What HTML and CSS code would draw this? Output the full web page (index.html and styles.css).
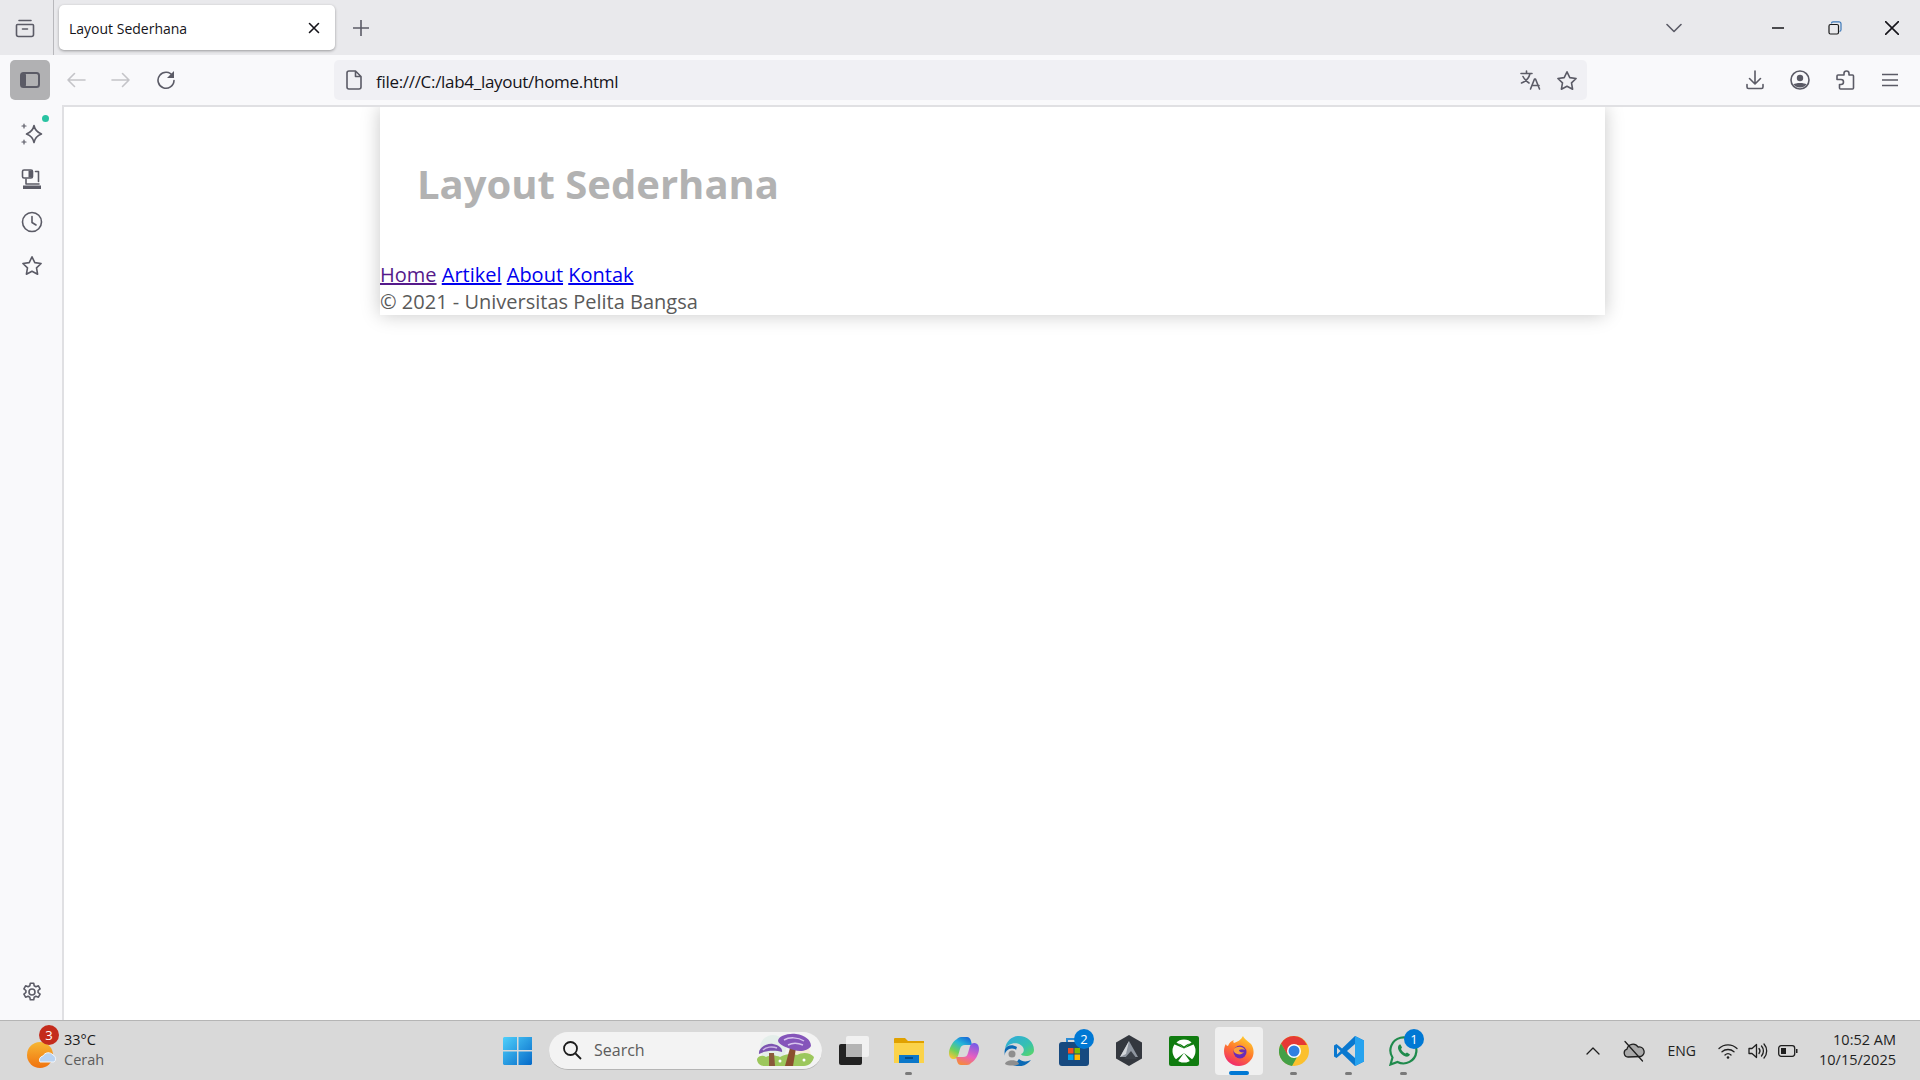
FILE: index.html
```html
<!DOCTYPE html>
<html lang="en">
<head>
  <meta charset="UTF-8">
  <title>Layout Sederhana</title>
  <link rel="stylesheet" href="styles.css">
</head>
<body>
  <div class="tabstrip">
    <div class="tabs-btn">
      <svg class="ico" width="22" height="22" viewBox="0 0 22 22"><path d="M5 3.5h12M3.5 7.5h15a1 1 0 0 1 1 1v9a2 2 0 0 1-2 2h-13a2 2 0 0 1-2-2v-9a1 1 0 0 1 1-1zM8.5 12h5"/></svg>
    </div>
    <div class="tab">
      <span class="tab-title">Layout Sederhana</span>
      <svg class="ico-dark" width="12" height="12" viewBox="0 0 12 12"><path d="M1.5 1.5l9 9M10.5 1.5l-9 9"/></svg>
    </div>
    <div class="new-tab">
      <svg class="ico" width="16" height="16" viewBox="0 0 16 16"><path d="M8 0v16M0 8h16"/></svg>
    </div>
    <div class="tab-list">
      <svg class="ico" width="16" height="10" viewBox="0 0 16 10"><path d="M1 1.5l7 7 7-7"/></svg>
    </div>
    <div class="win-btn">
      <svg class="ico-dark" width="12" height="2" viewBox="0 0 12 2"><path d="M0 1h12"/></svg>
    </div>
    <div class="win-btn">
      <svg width="14" height="14" viewBox="0 0 14 14" fill="none" stroke-width="1.2"><path d="M3.5 2.5v-.2A1.5 1.5 0 0 1 5 .8h6a2 2 0 0 1 2 2v6a1.5 1.5 0 0 1-1.5 1.5" stroke="#3c78b8"/><rect x="1" y="3.5" width="9.5" height="9.5" rx="1.5" stroke="#1a1a1a"/></svg>
    </div>
    <div class="win-btn">
      <svg class="ico-dark" width="14" height="14" viewBox="0 0 14 14"><path d="M.5.5l13 13M13.5.5l-13 13"/></svg>
    </div>
  </div>

  <div class="toolbar">
    <div class="sidebar-toggle">
      <svg width="20" height="16" viewBox="0 0 20 16"><rect x="1" y="1" width="18" height="14" rx="2.5" fill="#b1b1b3" stroke="#5b5b66" stroke-width="2"/><rect x="1" y="1" width="5" height="14" rx="2" fill="#5b5b66"/></svg>
    </div>
    <div class="nav-btn">
      <svg class="ico-faint" width="20" height="16" viewBox="0 0 20 16"><path d="M19 8H2M8.5 1.5L2 8l6.5 6.5"/></svg>
    </div>
    <div class="nav-btn">
      <svg class="ico-faint" width="20" height="16" viewBox="0 0 20 16"><path d="M1 8h17M11.5 1.5L18 8l-6.5 6.5"/></svg>
    </div>
    <div class="nav-btn">
      <svg class="ico" width="20" height="20" viewBox="0 0 20 20"><path d="M16.8 6A8 8 0 1 0 18 10.5"/><path class="solid" d="M18 1v7h-7z"/></svg>
    </div>
    <div class="urlbar">
      <svg class="ico" width="16" height="20" viewBox="0 0 16 20"><path d="M1 3a2 2 0 0 1 2-2h6.5L15 6.5V17a2 2 0 0 1-2 2H3a2 2 0 0 1-2-2zM9.5 1v5.5H15"/></svg>
      <span class="url-text">file:///C:/lab4_layout/home.html</span>
      <div class="url-actions">
        <svg class="ico" width="22" height="20" viewBox="0 0 22 20"><path d="M1 3.5h11M6.5 1v2.5M10 3.5C9 8 5.5 11.5 1.5 13M3 6.5c1.5 3 3.5 5 6 6.5M10.5 19l4-10h1l4 10M12 15.500h7"/></svg>
        <svg class="ico" width="22" height="21" viewBox="0 0 22 21"><path d="M11 1.800l2.800 5.800 6.300.9-4.600 4.400 1.100 6.300L11 16.200l-5.600 3 1.100-6.300L1.900 8.500l6.300-.9z"/></svg>
      </div>
    </div>
    <div class="tool-icons">
      <div class="tool-btn">
        <svg class="ico" width="18" height="20" viewBox="0 0 18 20"><path d="M9 1v12.5M3.5 8.500L9 14l5.500-5.500M1 14.500V17a1.500 1.500 0 0 0 1.500 1.500h13A1.500 1.500 0 0 0 17 17v-2.500"/></svg>
      </div>
      <div class="tool-btn">
        <svg class="ico" width="20" height="20" viewBox="0 0 20 20"><circle cx="10" cy="10" r="9"/><circle class="solid" cx="10" cy="8" r="3.2"/><path class="solid" d="M3.500 14.500c2-2 11-2 13 0-3 4-10 4-13 0z"/></svg>
      </div>
      <div class="tool-btn">
        <svg class="ico" width="20" height="20" viewBox="0 0 20 20"><path d="M9 5V3.500a2.500 2.500 0 0 1 5 0V5h3.500a1 1 0 0 1 1 1v12a1 1 0 0 1-1 1H5.500a1 1 0 0 1-1-1v-3.500H6a2.500 2.500 0 0 0 0-5H2V6a1 1 0 0 1 1-1z"/></svg>
      </div>
      <div class="tool-btn">
        <svg class="ico" width="16" height="14" viewBox="0 0 16 14"><path d="M0 1.500h16M0 7h16M0 12.500h16"/></svg>
      </div>
    </div>
  </div>

  <div class="browser-body">
    <div class="sidebar">
      <div class="side-btn">
        <span class="green-dot"></span>
        <svg class="ico" width="24" height="24" viewBox="0 -1 24 24"><path d="M14 3.500c.9 4.500 3 6.800 7.500 8.500-4.500 1.700-6.600 4-7.500 8.500-.9-4.500-3-6.800-7.500-8.500C11 10.300 13.100 8 14 3.500z"/><path class="thin" d="M4 2v4M2 4h4M4 18v4M2 20h4"/></svg>
      </div>
      <div class="side-btn">
        <svg class="ico" width="22" height="24" viewBox="0 -2 22 24"><rect x="1.500" y="2" width="10" height="8" rx="1.500"/><path class="solid" d="M7.500 2.500h4v7h-4z"/><path d="M14.500 3.500h3v10M5 11v5h13"/><path class="solid" d="M2 17.500h18V21H2z"/></svg>
      </div>
      <div class="side-btn">
        <svg class="ico" width="22" height="22" viewBox="0 0 22 22"><circle cx="11" cy="11" r="9.500"/><path d="M11 5.500V11.500l4 2.500"/></svg>
      </div>
      <div class="side-btn star-btn">
        <svg class="ico" width="22" height="21" viewBox="0 0 22 21"><path d="M11 1.800l2.800 5.800 6.300.9-4.600 4.400 1.100 6.300L11 16.200l-5.600 3 1.100-6.300L1.900 8.500l6.300-.9z"/></svg>
      </div>
      <div class="side-btn side-bottom">
        <svg class="ico" width="20" height="20" viewBox="0 0 20 20"><circle cx="10" cy="10" r="3"/><path d="M8.300 1.200h3.400l.5 2.600 1.700.9 2.500-.9 1.700 3-2 1.700v2l2 1.700-1.700 3-2.500-.9-1.700.9-.5 2.600H8.300l-.5-2.600-1.700-.9-2.500.9-1.700-3 2-1.700v-2l-2-1.700 1.700-3 2.500.9 1.700-.9z"/></svg>
      </div>
    </div>
    <div class="viewport">
      <div class="container">
        <header class="page-header"><h1>Layout Sederhana</h1></header>
        <nav class="page-nav">
          <a class="visited" href="#">Home</a>
          <a href="#">Artikel</a>
          <a href="#">About</a>
          <a href="#">Kontak</a>
        </nav>
        <footer class="page-footer">&copy; 2021 - Universitas Pelita Bangsa</footer>
      </div>
    </div>
  </div>

  <div class="taskbar">
    <div class="weather">
      <div class="weather-icon">
        <svg width="34" height="34" viewBox="0 0 34 34">
          <defs><linearGradient id="sun" x1="0" y1="0" x2="0" y2="1"><stop offset="0" stop-color="#f7b733"/><stop offset="1" stop-color="#f0720f"/></linearGradient></defs>
          <circle cx="14" cy="19" r="13" fill="url(#sun)"/>
          <path d="M14 26a4 4 0 0 1 3-6 6 6 0 0 1 10-1 4 4 0 0 1 1 7z" fill="#b9d3f2" stroke="#f2f6fb"/>
        </svg>
        <span class="badge badge-red">3</span>
      </div>
      <div class="weather-text">
        <span>33&deg;C</span>
        <span class="weather-sub">Cerah</span>
      </div>
    </div>

    <div class="task-center">
      <div class="start">
        <svg width="30" height="30" viewBox="0 0 30 30">
          <defs><linearGradient id="win" x1="0" y1="0" x2="1" y2="1"><stop offset="0" stop-color="#4fd0fb"/><stop offset="1" stop-color="#0569c8"/></linearGradient></defs>
          <path d="M1 1h13v13H0V2zM15.500 1H29v13H15.500zM0 15.500h14V29H1l-1-1zM15.500 15.500H29V28l-1 1H15.500z" fill="url(#win)"/>
        </svg>
      </div>
      <div class="search">
        <svg width="20" height="20" viewBox="0 0 20 20" fill="none" stroke="#1a1a1a" stroke-width="1.8"><circle cx="8.500" cy="8.500" r="6.500"/><path d="M13.500 13.500l5.500 5.500"/></svg>
        <span class="search-text">Search</span>
        <svg class="search-art" width="64" height="34" viewBox="0 0 64 34">
          <circle cx="19" cy="15" r="13" fill="#e4eeea"/>
          <circle cx="47" cy="22" r="10" fill="#f6ead6"/>
          <path d="M3 26c2-4 6-4 9-2 4-2 10-2 14 0 5-3 12-4 17-2 5-3 13-3 17 2-1 5-5 9-10 9H10c-4 0-7-3-7-7z" fill="#9cc75c"/>
          <path d="M15 20h5l1 13h-6z" fill="#8a5a3c"/>
          <path d="M36 15h6l-3 18h-8z" fill="#8a4f2e"/>
          <path d="M5 21c-1-6 7-11 14-10 6 1 10 5 9 8-6-2-16-2-23 2z" fill="#7b54b0"/>
          <path d="M9 17c3-3 9-4 14-2" stroke="#cdb6e6" stroke-width="1.5" fill="none"/>
          <path d="M24 8c0-5 10-8 18-7 9 1 15 6 15 12-3 5-11 6-17 4-7-2-15-5-16-9z" fill="#8555ba"/>
          <path d="M30 7c5-3 14-3 20 1M34 12c4-2 10-2 15 0" stroke="#d8c5ee" stroke-width="1.500" fill="none"/>
          <circle cx="26" cy="28" r="1.500" fill="#fff"/>
          <circle cx="50" cy="27" r="1.500" fill="#fff"/>
        </svg>
      </div>
      <div class="app">
        <svg width="30" height="30" viewBox="0 0 30 30"><rect x="0" y="8" width="23" height="21" rx="2" fill="#222"/><rect x="7" y="0" width="23" height="21" rx="2" fill="#f4f4f4" fill-opacity=".85"/><rect x="7" y="8" width="16" height="13" fill="#b4b4b4"/></svg>
      </div>
      <div class="app dot">
        <svg width="30" height="28" viewBox="0 0 30 28"><path d="M0 2a1 1 0 0 1 1-1h10l3 3h16v5H0z" fill="#e0a100"/><path d="M0 6h30v20H0z" fill="#fbd34a"/><path d="M5 18h20v8H5z" fill="#0b77c9"/><path d="M11 21h8" stroke="#063f74" stroke-width="1.500"/></svg>
      </div>
      <div class="app">
        <svg width="30" height="28" viewBox="0 0 30 28">
          <defs>
            <linearGradient id="copl" x1=".8" y1="0" x2=".2" y2="1"><stop offset="0" stop-color="#1668d8"/><stop offset=".35" stop-color="#27b7d8"/><stop offset=".7" stop-color="#6fd15a"/><stop offset="1" stop-color="#f4c63a"/></linearGradient>
            <linearGradient id="copr" x1=".7" y1="0" x2=".3" y2="1"><stop offset="0" stop-color="#7a5ce6"/><stop offset=".55" stop-color="#e95fc0"/><stop offset="1" stop-color="#f58a3c"/></linearGradient>
          </defs>
          <path d="M8 2c1-1 2-2 4-2h6c2 0 3 1 4 4l1 4h-7c-3 0-4 1-5 4l-2 7c-1 2-2 3-4 3-3 0-5-2-5-6 0-5 4-12 8-14z" fill="url(#copl)"/>
          <path d="M22 26c-1 1-2 2-4 2h-6c-2 0-3-1-4-4l-1-4h7c3 0 4-1 5-4l2-7c1-2 2-3 4-3 3 0 5 2 5 6 0 5-4 12-8 14z" fill="url(#copr)"/>
        </svg>
      </div>
      <div class="app">
        <svg width="30" height="30" viewBox="0 0 30 30">
          <defs><linearGradient id="edge" x1="0" y1="0" x2="1" y2="1"><stop offset="0" stop-color="#2fa8e0"/><stop offset=".6" stop-color="#35c1b0"/><stop offset="1" stop-color="#5fd85c"/></linearGradient></defs>
          <path d="M1 13C2 5 8 0 15 0c8 0 15 6 15 14 0 4-4 6-8 6-3 0-5-1-5-2 3-1 4-5 1-8C13 5 4 7 1 13z" fill="url(#edge)"/>
          <path d="M1 13c-2 8 3 16 12 17 6 1 11-2 14-6-4 2-9 2-12-1-3-3-4-8-2-12C8 8 3 9 1 13z" fill="#0c6ab5"/>
          <circle cx="8" cy="20" r="7.500" fill="#d9d9d9"/>
          <circle cx="8" cy="18" r="3.500" fill="#8e8e8e"/><path d="M1 28c1-5 13-5 14 0-3 2-11 2-14 0z" fill="#8e8e8e"/>
        </svg>
      </div>
      <div class="app">
        <svg width="30" height="30" viewBox="0 0 30 30"><path d="M8 6V3h14v3" fill="none" stroke="#2b8cd6" stroke-width="2"/><rect x="0" y="6" width="30" height="24" rx="3" fill="#174a80"/><rect x="9" y="12" width="5.500" height="5.500" fill="#f25022"/><rect x="15.500" y="12" width="5.500" height="5.500" fill="#7fba00"/><rect x="9" y="18.500" width="5.500" height="5.500" fill="#00a4ef"/><rect x="15.500" y="18.500" width="5.500" height="5.500" fill="#ffb900"/></svg>
        <span class="badge badge-blue">2</span>
      </div>
      <div class="app">
        <svg width="28" height="32" viewBox="0 0 28 32"><path d="M14 0l13 7.500v16L14 31 1 23.500v-16z" fill="#34383f"/><path d="M14 6l9 16H5z" fill="#8f96a0"/><path d="M14 6l-9 16 6-3z" fill="#d3d6da"/><path d="M9 24l7-8 6 8z" fill="#3c4149"/></svg>
      </div>
      <div class="app">
        <svg width="30" height="30" viewBox="0 0 30 30"><rect width="30" height="30" rx="2" fill="#107c10"/><circle cx="15" cy="15" r="11.500" fill="#fff"/><path d="M15 12.500L6.500 5.500 4.500 8zM15 12.500l8.500-7 2 2.500zM15 17L6 24l2.500 2zM15 17l9 7-2.500 2z" fill="#107c10"/><path d="M15 10.500c-2.500-2-4.500-3-6-3l6 5 6-5c-1.500 0-3.500 1-6 3z" fill="#107c10"/></svg>
      </div>
      <div class="app app-active">
        <svg width="30" height="30" viewBox="0 0 30 30">
          <defs><linearGradient id="fox" x1=".8" y1="0" x2=".3" y2="1"><stop offset="0" stop-color="#ffd52e"/><stop offset=".5" stop-color="#ff7a2b"/><stop offset="1" stop-color="#f0266e"/></linearGradient></defs>
          <path d="M19 0c1 3 5 5 8 8 3 4 3 9 2 12-2 6-8 10-14 10C6 30 0 23 0 15c0-3 1-6 2-7 0 1 1 2 2 2 1-3 3-5 6-6-1 1-1 2 0 3 3-1 7-3 9-7z" fill="url(#fox)"/>
          <circle cx="16" cy="16" r="6.500" fill="#6a2bb8"/>
          <path d="M10 13c3-3 9-3 11 1-2-1-4-1-6 0 0 2 3 3 5 2-2 3-6 3-9 1-1-1-2-3-1-4z" fill="#f9a03c"/>
        </svg>
      </div>
      <div class="app dot">
        <svg width="30" height="30" viewBox="0 0 30 30"><circle cx="15" cy="15" r="15" fill="#fbc02d"/><path d="M15 0a15 15 0 0 0-13 7.500L8.500 19 15 9h13A15 15 0 0 0 15 0z" fill="#e53935"/><path d="M2 7.500A15 15 0 0 0 13 30l6.500-11.500H8.500z" fill="#43a047"/><circle cx="15" cy="15" r="7" fill="#fff"/><circle cx="15" cy="15" r="5.500" fill="#2f7fe0"/></svg>
      </div>
      <div class="app dot">
        <svg width="30" height="30" viewBox="0 0 30 30"><path d="M21 0l9 4.500v21L21 30 8 17.500 2.500 22 0 20.500v-11L2.500 8 8 12.500z" fill="#0a78cf"/><path d="M21 0l9 4.500v21L21 30z" fill="#27a3ef"/><path d="M21 8l-8 7 8 7z" fill="#d9d9d9"/><path d="M3 11.500L6.500 15 3 18.500z" fill="#d9d9d9"/></svg>
      </div>
      <div class="app dot">
        <svg width="30" height="30" viewBox="0 0 30 30" fill="none"><path d="M1.500 28.500l2-7A13 13 0 1 1 8.500 26z" stroke="#1f8a4c" stroke-width="2.2"/><path d="M10.500 8.500c-1.500 1-2 3-1 5.500 1.500 3 4 5.500 7 6.500 2.500.5 4-.5 4.500-2l-3-2-1.500 1c-2-1-3.500-2.500-4.500-4.500l1-1.500-1.500-3z" fill="#1f8a4c"/></svg>
        <span class="badge badge-blue">1</span>
      </div>
    </div>

    <div class="tray">
      <svg class="tray-ico chevron" width="14" height="8" viewBox="0 0 14 8"><path d="M1 7l6-6 6 6"/></svg>
      <svg class="tray-ico cloud" width="22" height="22" viewBox="0 0 22 22"><path d="M5 17a4 4 0 0 1-1-7.800A6 6 0 0 1 15 7a5 5 0 0 1 3 9.500z" fill="#a9a9a9"/><path d="M2 1.500l17.500 19.500"/></svg>
      <span class="lang">ENG</span>
      <svg class="tray-ico wifi" width="20" height="16" viewBox="0 0 20 16"><path d="M1 5.500a13 13 0 0 1 18 0M4 8.800a9 9 0 0 1 12 0M7 12a4.500 4.500 0 0 1 6 0"/><circle class="solid" cx="10" cy="14.500" r="1.300"/></svg>
      <svg class="tray-ico speaker" width="20" height="16" viewBox="0 0 20 16"><path d="M1 5.500h3L8.500 1.500v13L4 10.500H1zM11 5.500a4 4 0 0 1 0 5M13.500 3a7.500 7.500 0 0 1 0 10M16 1a10.500 10.500 0 0 1 0 14"/></svg>
      <svg class="tray-ico battery" width="20" height="12" viewBox="0 0 20 12"><rect x=".7" y=".7" width="16" height="10.600" rx="2.500"/><rect class="solid" x="3" y="3" width="5" height="6"/><path class="solid" d="M18 4h1.500v4H18z"/></svg>
      <div class="clock">
        <span>10:52 AM</span>
        <span>10/15/2025</span>
      </div>
    </div>
  </div>
</body>
</html>
```

FILE: styles.css
```css
* {
  box-sizing: border-box;
}
body {
  margin: 0;
  display: flex;
  flex-direction: column;
  height: 1080px;
  overflow: hidden;
  font-family: "Open Sans", "Noto Sans", sans-serif;
  background: #fff;
}

/* shared icon strokes */
.ico, .ico-dark, .ico-faint, .tray-ico {
  fill: none;
  stroke-width: 1.6;
  stroke-linejoin: round;
  stroke-linecap: round;
}
.ico { stroke: #5b5b66; }
.ico-dark { stroke: #15141a; }
.ico-faint { stroke: #c4c4c8; }
.ico .solid { fill: #5b5b66; stroke: none; }
.ico .thin { stroke-width: 1.2; }

/* tab strip */
.tabstrip {
  display: flex;
  align-items: center;
  height: 55px;
  background: #e9e9ec;
  flex: none;
}
.tabs-btn {
  width: 54px;
  height: 55px;
  padding-right: 4px;
  display: flex;
  align-items: center;
  justify-content: center;
  border-right: 1px solid #b8b8bc;
}
.tab {
  width: 276px;
  height: 45px;
  margin-left: 5px;
  padding: 0 15px 0 10px;
  display: flex;
  align-items: center;
  justify-content: space-between;
  background: #fff;
  border-radius: 5px;
  box-shadow: 0 1px 3px rgba(0, 0, 0, .35);
  font-size: 14px;
  color: #15141a;
}
.tab-title {
  margin-top: 1px;
}
.new-tab {
  width: 16px;
  margin-left: 18px;
  display: flex;
}
.tab-list {
  margin-left: auto;
  margin-right: 67px;
  display: flex;
}
.win-btn {
  width: 57px;
  display: flex;
  justify-content: center;
}

/* toolbar */
.toolbar {
  display: flex;
  align-items: center;
  height: 50px;
  padding-left: 10px;
  background: #f9f9fb;
  flex: none;
}
.sidebar-toggle {
  width: 40px;
  height: 40px;
  margin-right: 3px;
  display: flex;
  align-items: center;
  justify-content: center;
  background: #b1b1b3;
  border-radius: 5px;
}
.nav-btn {
  width: 45px;
  display: flex;
  align-items: center;
  justify-content: center;
}
.urlbar {
  width: 1253px;
  height: 40px;
  margin-left: 146px;
  padding: 0 9px 0 12px;
  display: flex;
  align-items: center;
  background: #f0f0f4;
  border-radius: 5px;
}
.url-text {
  margin: 2px 0 0 14px;
  font-size: 17px;
  color: #15141a;
  letter-spacing: -.3px;
}
.url-actions {
  margin-left: auto;
  display: flex;
  align-items: center;
  gap: 14px;
}
.tool-icons {
  margin-left: 145px;
  display: flex;
  align-items: center;
}
.tool-btn {
  width: 45px;
  display: flex;
  align-items: center;
  justify-content: center;
}

/* sidebar + page */
.browser-body {
  display: flex;
  height: 915px;
  flex: none;
}
.sidebar {
  width: 64px;
  padding-top: 6px;
  display: flex;
  flex-direction: column;
  background: #f9f9fb;
  border-right: 2px solid #e0e0e3;
  flex: none;
}
.side-btn {
  position: relative;
  height: 44.5px;
  padding-left: 1px;
  display: flex;
  align-items: center;
  justify-content: center;
}
.star-btn {
  margin-top: -1px;
}
.side-bottom {
  margin-top: auto;
  margin-bottom: 6px;
}
.green-dot {
  position: absolute;
  top: 4px;
  left: 42px;
  width: 7px;
  height: 7px;
  border-radius: 50%;
  background: #2ac3a2;
}
.viewport {
  flex: 1;
  overflow: hidden;
  border-top: 2px solid #e0e0e3;
  background: #fff;
}
.container {
  width: 1225px;
  height: 208px;
  margin-left: 316px;
  background: #fff;
  box-shadow: 0 0 18px rgba(0, 0, 0, .22);
  font-size: 20px;
  line-height: 27px;
}
.page-header {
  height: 154px;
  padding: 52px 0 0 37px;
}
.page-header h1 {
  margin: 0;
  font-size: 40px;
  line-height: 50px;
  font-weight: 700;
  color: #b2b2b2;
}
.page-nav a {
  color: #0000ee;
}
.page-nav a.visited {
  color: #551a8b;
}
.page-footer {
  color: #5a5a5a;
}

/* taskbar */
.taskbar {
  display: flex;
  align-items: center;
  height: 60px;
  background: #d9d9d9;
  border-top: 1px solid #b5b5b5;
  flex: none;
}
.weather {
  width: 490px;
  padding-left: 26px;
  display: flex;
  align-items: center;
  flex: none;
}
.weather-icon {
  position: relative;
  width: 34px;
  height: 34px;
  margin-top: 4px;
}
.weather-text {
  margin: -2px 0 0 4px;
  display: flex;
  flex-direction: column;
  font-size: 14.5px;
  line-height: 20px;
  color: #1a1a1a;
}
.weather-sub {
  color: #5c5c5c;
}
.badge {
  position: absolute;
  width: 20px;
  height: 20px;
  border-radius: 50%;
  color: #fff;
  font-size: 13px;
  line-height: 20px;
  text-align: center;
}
.badge-red {
  top: -11px;
  left: 13px;
  background: #c42b1c;
}
.badge-blue {
  top: 2px;
  right: 7px;
  background: #0078d4;
}
.task-center {
  display: flex;
  align-items: center;
}
.start {
  width: 55px;
  display: flex;
  justify-content: center;
}
.search {
  width: 273px;
  height: 38px;
  margin: 0 4px;
  padding: 0 4px 0 13px;
  display: flex;
  align-items: center;
  background: #f3f3f3;
  border-radius: 19px;
  border-bottom: 1px solid #b5b5b5;
}
.search-text {
  margin-left: 12px;
  font-size: 16px;
  color: #5c5c5c;
}
.search-art {
  margin-left: auto;
}
.app {
  position: relative;
  width: 55px;
  height: 48px;
  display: flex;
  align-items: center;
  justify-content: center;
}
.app.dot::after {
  content: "";
  position: absolute;
  bottom: 0;
  left: 24px;
  width: 7px;
  height: 3px;
  border-radius: 2px;
  background: #7a7a7a;
}
.app-active {
  width: 48px;
  margin: 0 3.5px;
  background: #f0f0f0;
  border-radius: 4px;
}
.app-active::after {
  content: "";
  position: absolute;
  bottom: 0;
  left: 14px;
  width: 20px;
  height: 4px;
  border-radius: 2px;
  background: #0078d4;
}
.tray {
  margin-left: auto;
  padding-right: 24px;
  display: flex;
  align-items: center;
}
.tray-ico {
  stroke: #1f1f1f;
  stroke-width: 1.3;
}
.tray-ico .solid {
  fill: #1f1f1f;
  stroke: none;
}
.cloud {
  margin-left: 23px;
}
.lang {
  margin-left: 23px;
  font-size: 14px;
  color: #1f1f1f;
}
.wifi {
  margin-left: 22px;
}
.speaker {
  margin-left: 10px;
}
.battery {
  margin-left: 10px;
}
.clock {
  width: 86px;
  margin: -2px 0 0 12px;
  display: flex;
  flex-direction: column;
  align-items: flex-end;
  font-size: 14.5px;
  line-height: 20px;
  color: #1f1f1f;
}
```
